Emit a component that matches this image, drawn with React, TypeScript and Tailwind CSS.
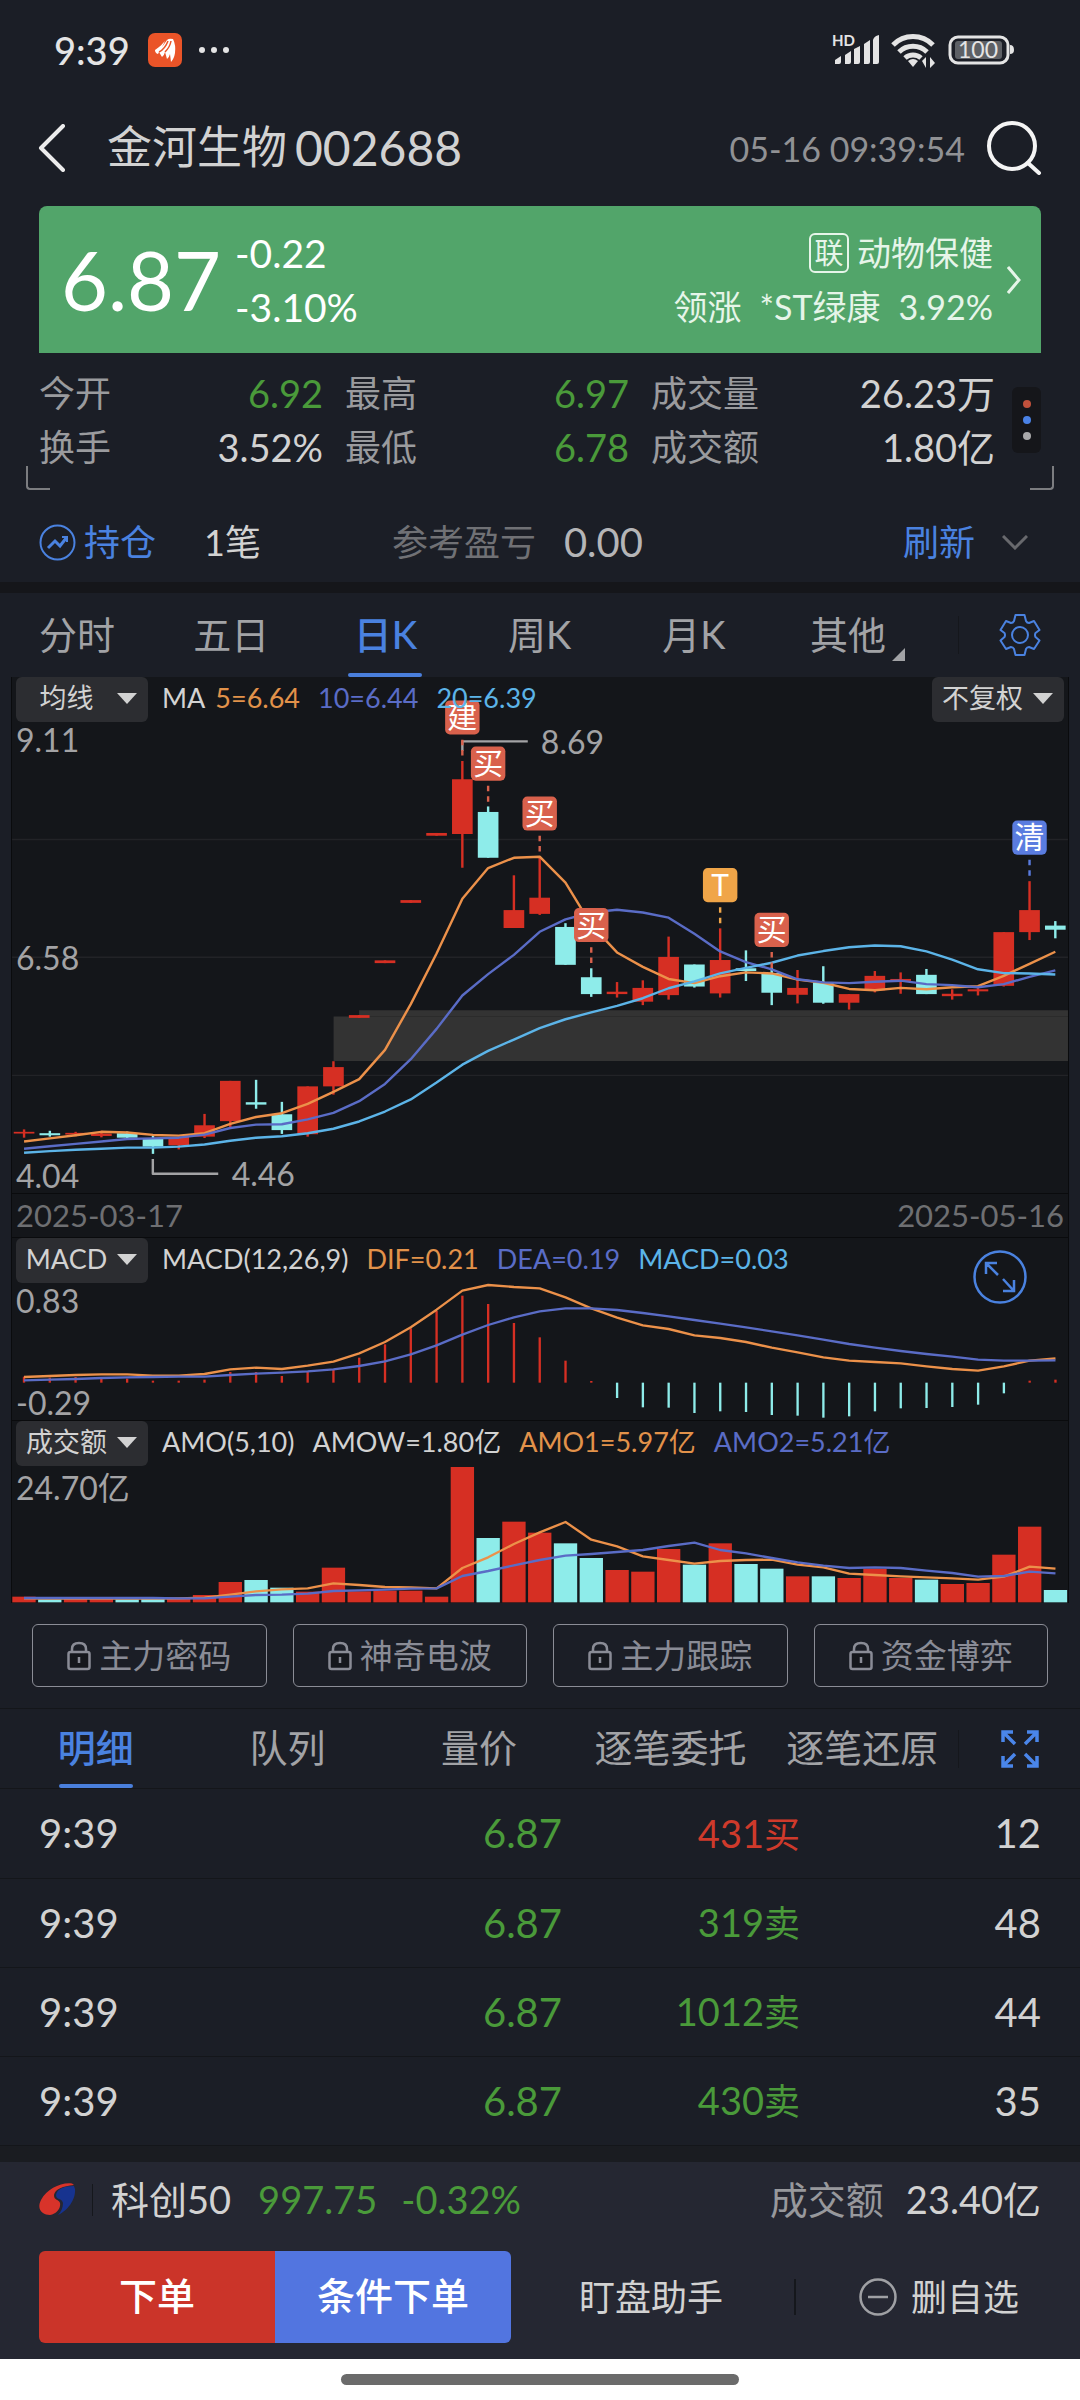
import React from "react";

const UP = "#d62f23";
const DOWN = "#8eecea";
const ORANGE = "#ec914a";
const INDIGO = "#5a6cc6";
const SKY = "#5cb4e8";

/* [high, bodyTop, bodyBottom, low, rising] in chart units, one entry per trading day */
const candles: [number, number, number, number, 0 | 1][] = [
  [1334, 1341, 1346, 1358, 1], [1338, 1345, 1351, 1355, 0], [1341, 1344, 1349, 1354, 1],
  [1338, 1346, 1353, 1357, 1], [1340, 1345, 1358, 1361, 0], [1353, 1360, 1384, 1405, 0],
  [1355, 1356, 1380, 1392, 1], [1289, 1322, 1355, 1359, 1], [1193, 1193, 1310, 1333, 1],
  [1190, 1255, 1262, 1274, 0], [1254, 1290, 1336, 1347, 0], [1209, 1209, 1348, 1355, 1],
  [1136, 1153, 1209, 1233, 1], [1002, 1002, 1010, 1010, 1], [843, 843, 851, 851, 1],
  [668, 668, 676, 676, 1], [473, 473, 481, 481, 1], [264, 317, 476, 574, 1],
  [396, 412, 545, 545, 0], [596, 697, 749, 749, 1], [545, 661, 708, 711, 1],
  [735, 746, 856, 856, 0], [866, 892, 941, 949, 0], [906, 934, 941, 951, 1],
  [901, 923, 963, 973, 1], [774, 833, 944, 957, 1], [855, 855, 919, 922, 0],
  [750, 842, 939, 951, 1], [814, 866, 874, 903, 0], [864, 880, 937, 973, 0],
  [871, 923, 943, 968, 1], [860, 907, 966, 969, 0], [941, 941, 966, 986, 1],
  [874, 888, 930, 936, 1], [878, 897, 903, 940, 1], [868, 885, 941, 941, 0],
  [927, 940, 947, 957, 1], [920, 927, 933, 945, 1], [761, 761, 917, 919, 1],
  [613, 697, 761, 784, 1], [729, 742, 754, 779, 0],
];
const ma5 = [1369, 1360, 1351, 1341, 1343, 1350, 1352, 1345, 1318, 1298, 1287, 1260, 1225, 1188, 1103, 970, 823, 664, 575, 545, 542, 617, 740, 820, 862, 897, 909, 889, 878, 881, 899, 908, 926, 930, 923, 927, 921, 918, 888, 853, 818];
const ma10 = [1390, 1383, 1376, 1369, 1362, 1360, 1358, 1349, 1330, 1320, 1319, 1305, 1286, 1252, 1202, 1130, 1042, 945, 883, 827, 760, 724, 704, 696, 704, 719, 766, 817, 848, 869, 898, 907, 909, 905, 902, 912, 915, 921, 912, 891, 872];
const ma20 = [1402, 1397, 1393, 1390, 1387, 1387, 1384, 1378, 1367, 1358, 1354, 1345, 1332, 1311, 1282, 1247, 1198, 1146, 1106, 1073, 1040, 1014, 994, 975, 953, 924, 904, 881, 865, 850, 829, 816, 805, 800, 802, 817, 841, 869, 880, 881, 884];

const ZERO = 609;
const macd = [591, 594, 592, 597, 597, 603, 603, 600, 577, 577, 589, 577, 570, 534, 494, 446, 394, 348, 373, 430, 473, 543, 604, 655, 683, 684, 700, 695, 697, 706, 708, 714, 710, 695, 686, 685, 682, 675, 641, 603, 600];
const dif = [592, 589, 586, 584, 584, 588, 588, 583, 569, 564, 568, 558, 546, 521, 487, 443, 390, 333, 316, 322, 326, 353, 386, 414, 437, 448, 467, 475, 487, 504, 518, 533, 543, 547, 551, 560, 568, 573, 560, 543, 536];
const dea = [602, 600, 598, 595, 593, 592, 591, 591, 586, 582, 579, 575, 569, 559, 545, 524, 497, 465, 436, 413, 395, 386, 386, 391, 400, 410, 421, 432, 443, 455, 467, 480, 493, 504, 514, 523, 531, 540, 543, 543, 542];

const FLOOR = 1265;
const amount = [1248, 1256, 1255, 1255, 1256, 1251, 1252, 1243, 1204, 1198, 1221, 1233, 1161, 1232, 1230, 1230, 1248, 859, 1072, 1023, 1056, 1088, 1132, 1168, 1173, 1105, 1152, 1088, 1150, 1164, 1187, 1187, 1192, 1164, 1192, 1197, 1210, 1207, 1122, 1038, 1228];
const amo5 = [1253, 1254, 1254, 1254, 1254, 1254, 1253, 1251, 1242, 1232, 1226, 1223, 1208, 1213, 1219, 1220, 1223, 1162, 1130, 1090, 1055, 1024, 1077, 1097, 1127, 1138, 1149, 1141, 1138, 1137, 1152, 1160, 1179, 1183, 1187, 1190, 1193, 1197, 1188, 1158, 1164];
const amo10 = [1252, 1252, 1252, 1252, 1252, 1252, 1253, 1253, 1248, 1243, 1242, 1239, 1231, 1229, 1227, 1224, 1223, 1186, 1171, 1154, 1138, 1125, 1120, 1114, 1108, 1096, 1086, 1108, 1118, 1132, 1145, 1155, 1162, 1160, 1162, 1170, 1177, 1188, 1186, 1173, 1178];

const priceX = (i: number) => 70 + i * 74.88;
const subX = (i: number) => 36 + i * 77.36;
const points = (ys: number[], x: (i: number) => number) =>
  ys.map((y, i) => `${x(i).toFixed(1)},${y}`).join(" ");

const markers = [
  { day: 17, top: 88, label: "建", color: "#d9614c" },
  { day: 18, top: 222, label: "买", color: "#d9614c" },
  { day: 20, top: 367, label: "买", color: "#d9614c" },
  { day: 22, top: 691, label: "买", color: "#d9614c" },
  { day: 27, top: 575, label: "T", color: "#f0a548" },
  { day: 29, top: 705, label: "买", color: "#d9614c" },
  { day: 39, top: 437, label: "清", color: "#5a7ce0" },
];

function PriceChart() {
  return (
    <svg viewBox="35 20 3067 1499" className="block w-full" role="img" aria-label="日K线">
      {[492, 834, 1177].map((y) => (
        <line key={y} x1="35" x2="3102" y1={y} y2={y} stroke="#222327" strokeWidth="4" />
      ))}
      <path d="M969 1006H1043V988H3102V1135H969Z" fill="#333333" />
      <path d="M1043 1006H3102" stroke="#2b2b2b" strokeWidth="3" />
      {candles.map(([high, top, bottom, low, up], i) => (
        <g key={i} fill={up ? UP : DOWN}>
          <rect x={priceX(i) - 3.5} y={high} width="7" height={low - high} />
          <rect x={priceX(i) - 30} y={top} width="60" height={bottom - top} />
        </g>
      ))}
      <g fill="none" strokeWidth="7" strokeLinejoin="round">
        <polyline points={points(ma5, priceX)} stroke={ORANGE} />
        <polyline points={points(ma10, priceX)} stroke={INDIGO} />
        <polyline points={points(ma20, priceX)} stroke={SKY} />
        <path d="M1343 235V207H1533M444 1420V1463H634" stroke="#a3a3a5" />
      </g>
      <g fill="#a3a3a5" fontSize="93">
        <text x="1571" y="243">8.69</text>
        <text x="673" y="1498">4.46</text>
      </g>
      {markers.map(({ day, top, label, color }) => (
        <g key={day}>
          <line x1={priceX(day)} x2={priceX(day)} y1={top + 114} y2={top + 162} stroke={color} strokeWidth="7" strokeDasharray="16 14" />
          <rect x={priceX(day) - 50} y={top} width="100" height="99" rx="14" fill={color} />
          <text x={priceX(day)} y={top + 80} fill="#fff" fontSize="87" textAnchor="middle">{label}</text>
        </g>
      ))}
    </svg>
  );
}

function MacdChart() {
  return (
    <svg viewBox="0 175 3168 546" className="block w-full" role="img" aria-label="MACD">
      {macd.map((v, i) => (
        <rect key={i} x={subX(i) - 3.5} width="7" y={Math.min(v, ZERO)} height={Math.abs(v - ZERO)} fill={v > ZERO ? DOWN : UP} />
      ))}
      <g fill="none" strokeWidth="7" strokeLinejoin="round">
        <polyline points={points(dif, subX)} stroke={ORANGE} />
        <polyline points={points(dea, subX)} stroke={INDIGO} />
      </g>
    </svg>
  );
}

function AmountChart() {
  return (
    <svg viewBox="0 721 3168 546" className="block w-full" role="img" aria-label="成交额">
      {amount.map((v, i) => (
        <rect key={i} x={subX(i) - 35} width="70" y={v} height={FLOOR - v} fill={candles[i][4] ? UP : DOWN} />
      ))}
      <g fill="none" strokeWidth="7" strokeLinejoin="round">
        <polyline points={points(amo5, subX)} stroke={ORANGE} />
        <polyline points={points(amo10, subX)} stroke={INDIGO} />
      </g>
    </svg>
  );
}

function PickerButton({ children }: { children: React.ReactNode }) {
  return (
    <button className="flex h-[45px] w-[132px] items-center justify-center rounded-md bg-[#2c2d31] pb-[2px] text-[27px] text-[#d2d2d2]">
      <span className="flex-1 text-center">{children}</span>
      <svg viewBox="0 0 20 11" className="mr-[11px] h-[11px] w-[20px]" fill="currentColor"><path d="M0 0H20L10 11Z" /></svg>
    </button>
  );
}

function Legend({ name, items }: { name: string; items: { text: string; className: string }[] }) {
  return (
    <div className="absolute inset-x-0 top-0 flex items-center px-1">
      <PickerButton>{name}</PickerButton>
      <div className="ml-[14px] flex gap-[18px] whitespace-nowrap pb-[2px] text-[27px]">
        {items.map((it) => <span key={it.text} className={it.className}>{it.text}</span>)}
      </div>
    </div>
  );
}

const stats = [
  { label: "今开", value: "6.92", green: true }, { label: "最高", value: "6.97", green: true }, { label: "成交量", value: "26.23万", green: false },
  { label: "换手", value: "3.52%", green: false }, { label: "最低", value: "6.78", green: true }, { label: "成交额", value: "1.80亿", green: false },
];

const trades = [
  { price: "6.87", volume: "431买", count: 12, buy: true },
  { price: "6.87", volume: "319卖", count: 48, buy: false },
  { price: "6.87", volume: "1012卖", count: 44, buy: false },
  { price: "6.87", volume: "430卖", count: 35, buy: false },
];

function StatusBar() {
  return (
    <div className="flex h-[100px] items-center justify-between pl-[54px] pr-[66px]">
      <div className="flex items-center text-[#e4e4e4]">
        <span className="text-[38px] font-medium">9:39</span>
        <svg viewBox="0 0 34 34" className="ml-[18px] size-[34px]">
          <rect width="34" height="34" rx="7" fill="#ea5428" />
          <path d="M7 17C12 14 15 10 17 8L14 14L19 7Q21 5 25 6Q28 12 27 20Q26 26 23 29L22 21Q21 25 19 26L17 19Q16 23 14 24L11 19L10 21Q7 20 7 17Z" fill="#fff" />
          <path d="M11 19Q17 16 20 8M17 19Q22 14 23 8" fill="none" stroke="#ea5428" strokeWidth="1.500" />
        </svg>
        <span className="ml-[17px] flex gap-[6px]">
          <i className="size-[6px] rounded-full bg-current" /><i className="size-[6px] rounded-full bg-current" /><i className="size-[6px] rounded-full bg-current" />
        </span>
      </div>
      <svg viewBox="0 0 182 36" className="h-[36px] w-[182px]" fill="#e4e4e4">
        <text x="0" y="14" fontSize="15" fontWeight="700">HD</text>
        <path d="M3 32V28L9 24V30Q9 32 7 32ZM13 32V23L19 19V30Q19 32 17 32ZM22 32V17L28 14V30Q28 32 26 32ZM32 32V12L38 8V30Q38 32 36 32ZM41 32V8Q42 4 47 3V30Q47 32 45 32Z" />
        <g fill="none" stroke="#e4e4e4" strokeWidth="5"><path d="M61 13A28 28 0 0 1 101 13" /><path d="M67 20A20 20 0 0 1 95 20" /><path d="M73 26A12 12 0 0 1 89 26" /></g>
        <path d="M76 29Q81 25 86 29L81 35Z" /><path d="M90 29L94 25V36ZM103 31L98 36V25Z" />
        <rect x="118" y="5" width="58" height="26" rx="8" fill="none" stroke="#e4e4e4" strokeWidth="3" />
        <rect x="123" y="9" width="47" height="18" rx="3" fill="#5d6065" />
        <path d="M178 13Q182 13 182 18Q182 22 178 22Z" />
        <text x="146" y="26" fontSize="23" textAnchor="middle">100</text>
      </svg>
    </div>
  );
}

export default function App() {
  return (
    <div className="flex min-h-screen flex-col bg-[#1b1e26] font-['Lato','Noto_Sans_CJK_SC',sans-serif] text-[#d2d2d2]">
      <StatusBar />
      <header className="flex h-[106px] items-center pb-[10px] pl-[38px] pr-[38px]">
        <button aria-label="返回"><svg viewBox="0 0 28 48" className="h-[48px] w-[28px]" fill="none" stroke="#ececec" strokeWidth="4" strokeLinecap="round" strokeLinejoin="round"><path d="M25 2L3 24L25 46" /></svg></button>
        <h1 className="ml-[41px] flex items-center gap-[8px]"><span className="text-[45px]">金河生物</span><span className="text-[48px]">002688</span></h1>
        <time className="ml-auto text-[34px] text-[#909194]">05-16 09:39:54</time>
        <button aria-label="搜索" className="ml-[21px]"><svg viewBox="0 0 56 54" className="h-[54px] w-[56px]" fill="none" stroke="#f4f4f4" strokeWidth="4" strokeLinecap="round"><circle cx="26" cy="25" r="23" /><path d="M42 42L53 52" /></svg></button>
      </header>

      <main className="flex-1">
        <section className="mx-[39px] flex h-[147px] items-center rounded-t-lg bg-[#52a56a] pl-[22px] pr-[20px] text-white">
          <strong className="text-[81px] font-normal leading-none">6.87</strong>
          <div className="ml-[14px] flex flex-col text-[39px] leading-[54px]"><span>-0.22</span><span>-3.10%</span></div>
          <a href="#sector" className="ml-auto flex items-center text-[34px] leading-[54px] text-[#e6f5e9]">
            <span className="flex flex-col items-end">
              <span className="flex items-center gap-2"><span className="flex size-[40px] items-center justify-center rounded-md border-2 border-[#e6f5e9] text-[29px] leading-none">联</span>动物保健</span>
              <span className="flex gap-[18px]"><span>领涨</span><span>*ST绿康</span><span>3.92%</span></span>
            </span>
            <svg viewBox="0 0 14 28" className="ml-[14px] h-[28px] w-[14px]" fill="none" stroke="#e6f5e9" strokeWidth="3"><path d="M1 1L12 14L1 27" /></svg>
          </a>
        </section>

        <section className="relative flex items-center px-[39px] pb-[16px] pt-[13px]">
          <dl className="grid flex-1 grid-cols-[284px_284px_1fr] gap-x-[22px] text-[36px] leading-[54px]">
            {stats.map((s) => (
              <div key={s.label} className="flex justify-between">
                <dt className="text-[#9a9b9e]">{s.label}</dt>
                <dd className={s.green ? "text-[38px] text-[#4a9a3a]" : "text-[38px]"}>{s.value}</dd>
              </div>
            ))}
          </dl>
          <button aria-label="更多" className="ml-[17px] flex h-[66px] w-[29px] flex-col items-center justify-center gap-2 rounded-md bg-[#15161a]">
            <i className="size-2 rounded-full bg-[#c1513c]" /><i className="size-2 rounded-full bg-[#4a82e6]" /><i className="size-2 rounded-full bg-[#a9a9ab]" />
          </button>
          <span className="absolute bottom-0 left-[26px] size-6 rounded-bl border-b-2 border-l-2 border-[#7c7d80]" />
          <span className="absolute bottom-0 right-[26px] size-6 rounded-br border-b-2 border-r-2 border-[#7c7d80]" />
        </section>

        <section className="flex h-[92px] items-center px-[39px] pt-[12px] text-[36px]">
          <a href="#holding" className="flex items-center gap-[8px] text-[#4a82e0]">
            <svg viewBox="0 0 37 37" className="size-[37px]" fill="none" stroke="currentColor" strokeWidth="2"><circle cx="18.500" cy="18.500" r="17" /><path d="M9 24L16 17L21 22L28 13" strokeWidth="3" /><path d="M23 13H28V18" /></svg>
            持仓
          </a>
          <span className="ml-[48px]">1笔</span>
          <span className="ml-[131px] text-[#707175]">参考盈亏</span>
          <span className="ml-[28px] text-[40px] text-[#b5b5b7]">0.00</span>
          <button className="ml-auto text-[#4a82e0]">刷新</button>
          <svg viewBox="0 0 26 15" className="ml-[27px] mr-[13px] h-[15px] w-[26px]" fill="none" stroke="#68696d" strokeWidth="3"><path d="M1 1L13 13L25 1" /></svg>
        </section>
        <div className="h-[11px] bg-[#15161a]" />

        <nav className="flex h-[84px] items-center text-[38px] text-[#a2a3a6]">
          <div className="grid h-full flex-1 grid-cols-6">
            {["分时", "五日", "日K", "周K", "月K", "其他"].map((t) => (
              <button key={t} className={t === "日K" ? "relative pb-[2px] font-medium text-[#4a82e0]" : "relative pb-[2px]"}>
                {t}
                {t === "日K" && <i className="absolute bottom-0 left-1/2 h-1 w-[74px] -translate-x-1/2 rounded bg-[#4a7fdc]" />}
                {t === "其他" && <svg viewBox="0 0 13 13" className="absolute bottom-4 right-[20px] size-[13px]" fill="currentColor"><path d="M13 0V13H0Z" /></svg>}
              </button>
            ))}
          </div>
          <i className="ml-[33px] h-[38px] w-px bg-[#15171c]" />
          <button aria-label="设置" className="ml-[40px] mr-[39px] text-[#4a82e0]">
            <svg viewBox="0 0 42 42" className="size-[42px]" fill="none" stroke="currentColor" strokeWidth="2" strokeLinejoin="round"><path d="M16.500 1H25.500L27 7Q28 9 30 9L35 7L40.500 16L36.500 19Q35.500 21 36.500 23L40.500 26.500L35 35L30 33Q28 33 27 35L25.500 41H16.500L15 35Q14 33 12 33L7 35L1.500 26.500L5.500 23Q6.500 21 5.500 19L1.500 16L7 7L12 9Q14 9 15 7Z" /><circle cx="21" cy="21" r="8" /></svg>
          </button>
        </nav>

        <section className="mx-[11px] border-x border-[#0a0b0d] bg-[#14161a]">
          <div className="relative">
            <PriceChart />
            <div className="absolute inset-y-0 left-1 flex flex-col justify-between pt-[46px] text-[32px] leading-[34px] text-[#a3a3a5]">
              <span>9.11</span><span>6.58</span><span>4.04</span>
            </div>
            <Legend name="均线" items={[{ text: "MA", className: "" }, { text: "5=6.64", className: "-ml-2 text-[#e2924a]" }, { text: "10=6.44", className: "text-[#5a6cc6]" }, { text: "20=6.39", className: "text-[#5cb4e8]" }]} />
            <div className="absolute right-1 top-0"><PickerButton>不复权</PickerButton></div>
          </div>
          <div className="flex h-[45px] items-center justify-between border-y border-[#0a0b0d] px-1 text-[31px] text-[#6e6f72]"><span>2025-03-17</span><span>2025-05-16</span></div>
          <div className="relative">
            <MacdChart />
            <div className="absolute inset-y-0 left-1 flex flex-col justify-between pt-[46px] text-[32px] leading-[34px] text-[#a3a3a5]"><span>0.83</span><span>-0.29</span></div>
            <Legend name="MACD" items={[{ text: "MACD(12,26,9)", className: "" }, { text: "DIF=0.21", className: "text-[#e2924a]" }, { text: "DEA=0.19", className: "text-[#5a6cc6]" }, { text: "MACD=0.03", className: "text-[#5cb4e8]" }]} />
            <button aria-label="放大" className="absolute right-[41px] top-[12px] text-[#4a82e0]">
              <svg viewBox="0 0 54 54" className="size-[54px]" fill="none" stroke="currentColor" strokeWidth="2.500"><circle cx="27" cy="27" r="25.500" /><path d="M13 24V13H24M13 13L25 25M30 29L41 41M30 41H41V30" /></svg>
            </button>
          </div>
          <div className="relative border-t border-[#0a0b0d]">
            <AmountChart />
            <div className="absolute left-1 top-[48px] text-[32px] leading-[38px] text-[#a3a3a5]">24.70亿</div>
            <Legend name="成交额" items={[{ text: "AMO(5,10)", className: "" }, { text: "AMOW=1.80亿", className: "" }, { text: "AMO1=5.97亿", className: "text-[#e2924a]" }, { text: "AMO2=5.21亿", className: "text-[#5a6cc6]" }]} />
          </div>
        </section>

        <section className="grid grid-cols-4 gap-[26px] px-[32px] pb-[21px] pt-[21px]">
          {["主力密码", "神奇电波", "主力跟踪", "资金博弈"].map((t) => (
            <button key={t} className="flex h-[63px] items-center justify-center gap-[8px] rounded-md border border-[#8b8d96] text-[33px] text-[#8a8c96]">
              <svg viewBox="0 0 24 30" className="h-[30px] w-[24px]" fill="none" stroke="currentColor" strokeWidth="2.500"><rect x="1.500" y="11" width="21" height="17" rx="2" fill="#15171c" /><path d="M5 11V8Q5 2 12 2Q19 2 19 8V11M12 16V22" /></svg>
              {t}
            </button>
          ))}
        </section>

        <nav className="flex h-[81px] items-center border-y border-[#14161a] text-[38px] text-[#a2a3a6]">
          <div className="grid h-full flex-1 grid-cols-5">
            {["明细", "队列", "量价", "逐笔委托", "逐笔还原"].map((t) => (
              <button key={t} className={t === "明细" ? "relative pb-[2px] font-medium text-[#4a82e0]" : "relative pb-[2px]"}>
                {t}
                {t === "明细" && <i className="absolute bottom-0 left-1/2 h-1 w-[74px] -translate-x-1/2 rounded bg-[#4a7fdc]" />}
              </button>
            ))}
          </div>
          <i className="h-[38px] w-px bg-[#15171c]" />
          <button aria-label="全屏" className="ml-[42px] mr-[41px] text-[#4a86ea]">
            <svg viewBox="0 0 38 38" className="size-[38px]" fill="none" stroke="currentColor" strokeWidth="3.500"><path d="M2 12V2H12M2 2L14 14M26 2H36V12M36 2L24 14M2 26V36H12M2 36L14 24M36 26V36H26M36 36L24 24" /></svg>
          </button>
        </nav>

        <table className="w-full table-fixed text-[40px]">
          <tbody>
            {trades.map((t, i) => (
              <tr key={i} className="h-[89px] border-b border-[#14161a]">
                <td className="w-[280px] pl-[39px]">9:39</td>
                <td className="w-[282px] text-right text-[#4a9a3a]">{t.price}</td>
                <td className={t.buy ? "w-[238px] text-right text-[38px] text-[#cf3a2b]" : "w-[238px] text-right text-[38px] text-[#4a9a3a]"}>{t.volume.slice(0, -1)}<span className="text-[36px]">{t.volume.slice(-1)}</span></td>
                <td className="pr-[39px] text-right">{t.count}</td>
              </tr>
            ))}
          </tbody>
        </table>
      </main>

      <footer className="bg-[#252732]">
        <div className="h-[16px] bg-[#1a1c21]" />
        <div className="flex h-[76px] items-center px-[39px] text-[38px]">
          <svg viewBox="0 0 37 33" className="h-[33px] w-[37px]"><path d="M33 0.500C22 -1 8 6 2 17C-3 27 4 32 11 32C18 31 22 25 21 20C20 16 15 18 15 12C16 6 24 3 35 2Z" fill="#d8332a" /><path d="M35 3C25 3 18 6 17 12C17 17 23 15 24 20C24 25 22 29 19 32C28 28 37 17 36 6Z" fill="#17338f" /></svg>
          <i className="ml-4 h-8 w-px bg-[#15171c]" />
          <span className="ml-[18px]">科创50</span>
          <span className="ml-[27px] text-[#4a9a3a]">997.75</span>
          <span className="ml-[24px] text-[#4a9a3a]">-0.32%</span>
          <span className="ml-auto text-[#97989c]">成交额</span>
          <span className="ml-[22px]">23.40亿</span>
        </div>
        <div className="flex items-center px-[39px] pb-4 pt-[13px] text-[36px]">
          <div className="flex h-[92px] w-[472px] overflow-hidden rounded-md text-[38px] font-medium text-white">
            <button className="flex-1 bg-[#cb3429] pb-[2px]">下单</button>
            <button className="flex-1 bg-[#5275e0] pb-[2px]">条件下单</button>
          </div>
          <button className="ml-[68px]">盯盘助手</button>
          <i className="ml-[71px] h-[36px] w-[2px] bg-[#15171c]" />
          <button className="ml-auto mr-[22px] flex items-center gap-[14px]">
            <svg viewBox="0 0 38 38" className="size-[38px]" fill="none" stroke="#9fa0a4" strokeWidth="2.500"><circle cx="19" cy="19" r="17.500" /><path d="M9 19H29" /></svg>
            删自选
          </button>
        </div>
        <div className="flex h-[42px] items-center justify-center bg-white"><i className="h-[11px] w-[398px] rounded-full bg-[#6b6b6b]" /></div>
      </footer>
    </div>
  );
}
